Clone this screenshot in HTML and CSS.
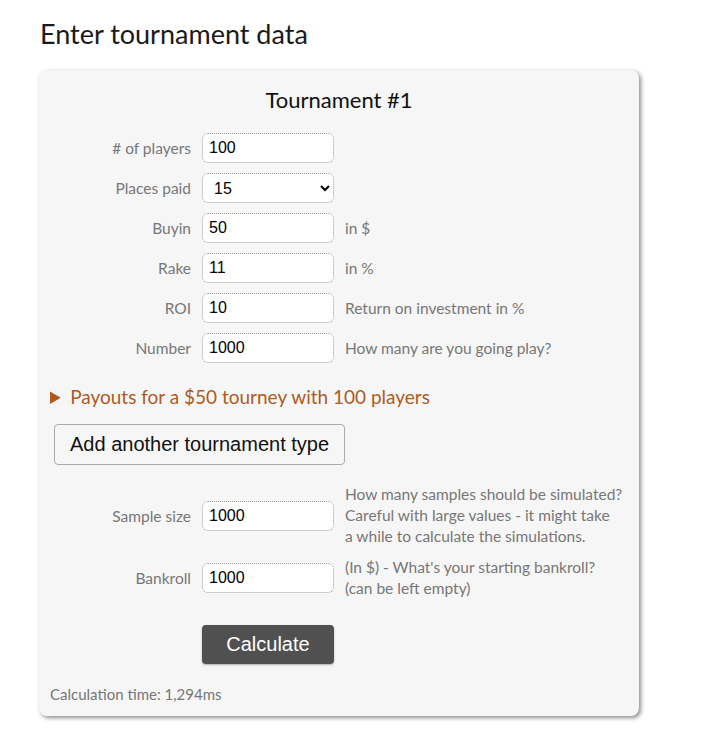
FILE: index.html
```html
<!DOCTYPE html>
<html lang="en">
<head>
    <meta charset="UTF-8">
    <meta name="viewport" content="width=device-width, initial-scale=1.0">
    <title>Tournament simulator</title>
    <link rel="stylesheet" href="styles.css">
</head>
<body>
    <div class="page">
        <h1>Enter tournament data</h1>
        <div class="card">
            <h2>Tournament #1</h2>
            <div class="form-grid">
                <label for="players">#&nbsp;of players</label>
                <input type="text" id="players" value="100">
                <span class="hint"></span>

                <label for="paid">Places paid</label>
                <select id="paid">
                    <option>15</option>
                </select>
                <span class="hint"></span>

                <label for="buyin">Buyin</label>
                <input type="text" id="buyin" value="50">
                <span class="hint">in $</span>

                <label for="rake">Rake</label>
                <input type="text" id="rake" value="11">
                <span class="hint">in %</span>

                <label for="roi">ROI</label>
                <input type="text" id="roi" value="10">
                <span class="hint">Return on investment in %</span>

                <label for="number">Number</label>
                <input type="text" id="number" value="1000">
                <span class="hint">How many are you going play?</span>
            </div>

            <details class="payouts">
                <summary>Payouts for a $50 tourney with 100 players</summary>
            </details>

            <button type="button" class="add-btn">Add another tournament type</button>

            <div class="form-grid sim-grid">
                <label for="samples">Sample size</label>
                <input type="text" id="samples" value="1000">
                <span class="hint">How many samples should be simulated? Careful with large values - it might take a&nbsp;while to calculate the simulations.</span>

                <label for="bankroll">Bankroll</label>
                <input type="text" id="bankroll" value="1000">
                <span class="hint">(In $) - What's your starting bankroll? (can be left empty)</span>

                <span></span>
                <button type="button" class="calc-btn">Calculate</button>
                <span></span>
            </div>

            <p class="calc-time">Calculation time: 1,294ms</p>
        </div>
    </div>
</body>
</html>
```

FILE: styles.css
```css
body {
    margin: 0;
    background-color: #ffffff;
    font-family: Lato, "Open Sans", sans-serif;
    color: #222;
}

.page {
    padding: 17px 0 24px 39px;
    width: 600px;
}

h1 {
    font-size: 27px;
    font-weight: 400;
    margin: 0 0 20px 1px;
    color: #1a1a1a;
}

.card {
    background-color: #f6f6f6;
    border-radius: 8px;
    box-shadow: 2px 2px 4px rgba(0, 0, 0, 0.45);
    padding: 16px 11px 13px 11px;
}

h2 {
    text-align: center;
    font-size: 22px;
    font-weight: 400;
    margin: 0 0 20px 0;
    color: #111;
}

.form-grid {
    display: grid;
    grid-template-columns: 141px 132px 1fr;
    column-gap: 11px;
    row-gap: 10px;
    align-items: center;
}

.form-grid label {
    text-align: right;
    font-size: 15.5px;
    color: #777;
}

.hint {
    font-size: 15.5px;
    color: #777;
    line-height: 21px;
    max-width: 278px;
}

input[type="text"],
select {
    box-sizing: border-box;
    width: 132px;
    height: 30px;
    padding: 2px 6px;
    border: 1px dotted #999;
    border-radius: 6px;
    background: #fff;
    font-family: "Liberation Sans", Arial, sans-serif;
    font-size: 16px;
    color: #000;
}

select {
    padding-left: 7px;
}

.payouts {
    margin: 22px 0 0 0;
    color: #b05a1e;
    font-size: 19px;
}

.payouts summary {
    cursor: pointer;
}

.add-btn {
    margin: 16px 0 0 4px;
    padding: 8px 15px;
    font-family: "Liberation Sans", Arial, sans-serif;
    font-size: 20px;
    color: #111;
    background: #f6f6f6;
    border: 1px solid #aaa;
    border-radius: 4px;
}

.sim-grid {
    margin-top: 19px;
    row-gap: 10px;
}

.calc-btn {
    margin-top: 16px;
    width: 132px;
    height: 39px;
    background-color: #505050;
    color: #fff;
    border: none;
    border-radius: 4px;
    font-family: "Liberation Sans", Arial, sans-serif;
    font-size: 20px;
    box-shadow: 0 1px 2px rgba(0, 0, 0, 0.3);
}

.calc-time {
    margin: 21px 0 0 0;
    font-size: 15px;
    color: #777;
}
```
